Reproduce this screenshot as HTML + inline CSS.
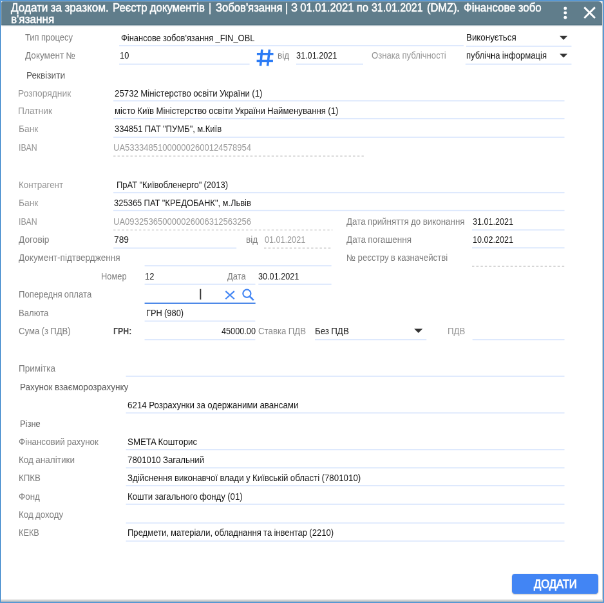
<!DOCTYPE html>
<html lang="uk"><head><meta charset="utf-8"><title>Додати за зразком</title>
<style>
html,body{margin:0;padding:0}
body{width:604px;height:603px;overflow:hidden;position:relative;background:#fff;font-family:"Liberation Sans",sans-serif}
#page{position:absolute;left:0;top:0;width:937.89px;height:936.34px;transform-origin:0 0;transform:scale(0.644);will-change:transform;background:#fff;overflow:hidden}
#hdr{position:absolute;left:1.55px;top:1.86px;width:933.54px;height:37.58px;background:#607d8b;border-radius:3px 6px 0 0;border-bottom:1.5px solid #50707f;box-sizing:border-box;box-shadow:0 1px 1.5px rgba(70,100,120,.55)}
.t{position:absolute;white-space:nowrap;word-spacing:-0.4px;line-height:1;transform-origin:0 0;display:block}
#btn{position:absolute;left:794.72px;top:891.15px;width:133.85px;height:30.90px;background:#4285f4;border-radius:4.5px;box-shadow:0 1px 2px rgba(0,0,0,.3)}
svg{position:absolute;overflow:visible}
</style></head><body><div id="page">
<div id="hdr"></div>

<div id="btn"></div>
<span class="t" style="left:16.93px;top:3px;font-size:18px;color:#fff;-webkit-text-stroke:0.55px #fff;transform:scaleX(0.9500);">Додати за зразком.</span>
<span class="t" style="left:175.31px;top:3px;font-size:18px;color:#fff;-webkit-text-stroke:0.55px #fff;transform:scaleX(0.9289);">Реєстр документів</span>
<span class="t" style="left:324.38px;top:3px;font-size:18px;color:#fff;-webkit-text-stroke:0.55px #fff;transform:scaleX(0.9000);">|</span>
<span class="t" style="left:334.63px;top:3px;font-size:18px;color:#fff;-webkit-text-stroke:0.55px #fff;transform:scaleX(0.9246);">Зобов'язання</span>
<span class="t" style="left:442.55px;top:3px;font-size:18px;color:#fff;-webkit-text-stroke:0.55px #fff;transform:scaleX(0.9000);">|</span>
<span class="t" style="left:451.86px;top:3px;font-size:18px;color:#fff;-webkit-text-stroke:0.55px #fff;transform:scaleX(0.9227);">З 01.01.2021 по</span>
<span class="t" style="left:576.55px;top:3px;font-size:18px;color:#fff;-webkit-text-stroke:0.55px #fff;transform:scaleX(0.8824);">31.01.2021</span>
<span class="t" style="left:662.73px;top:3px;font-size:18px;color:#fff;-webkit-text-stroke:0.55px #fff;transform:scaleX(0.9097);">(DMZ).</span>
<span class="t" style="left:719.88px;top:3px;font-size:18px;color:#fff;-webkit-text-stroke:0.55px #fff;transform:scaleX(0.9342);">Фінансове зобо</span>
<span class="t" style="left:16.93px;top:21px;font-size:18px;color:#fff;-webkit-text-stroke:0.55px #fff;transform:scaleX(0.9518);">в'язання</span>
<span class="t" style="left:39.13px;top:51px;font-size:14px;color:#7c7c7c;transform:scaleX(0.9281);">Тип процесу</span>
<span class="t" style="left:187.89px;top:52px;font-size:14px;color:#161616;transform:scaleX(0.9223);">Фінансове зобов'язання _FIN_OBL</span>
<span class="t" style="left:724.38px;top:51px;font-size:14px;color:#161616;transform:scaleX(0.9539);">Виконується</span>
<span class="t" style="left:39.13px;top:79px;font-size:14px;color:#7c7c7c;transform:scaleX(0.9688);">Документ №</span>
<span class="t" style="left:186.34px;top:79px;font-size:14px;color:#161616;transform:scaleX(0.9170);">10</span>
<span class="t" style="left:430.59px;top:79px;font-size:14px;color:#7c7c7c;transform:scaleX(0.9623);">від</span>
<span class="t" style="left:459.63px;top:79px;font-size:14px;color:#161616;transform:scaleX(0.9040);">31.01.2021</span>
<span class="t" style="left:577.33px;top:79px;font-size:14px;color:#949494;transform:scaleX(0.9384);">Ознака публічності</span>
<span class="t" style="left:724.38px;top:79px;font-size:14px;color:#161616;transform:scaleX(0.9345);">публічна інформація</span>
<span class="t" style="left:41.15px;top:110px;font-size:14px;color:#555;transform:scaleX(0.9746);">Реквізити</span>
<span class="t" style="left:28.26px;top:138px;font-size:14px;color:#949494;transform:scaleX(0.9891);">Розпорядник</span>
<span class="t" style="left:177.80px;top:138px;font-size:14px;color:#161616;transform:scaleX(0.9488);">25732 Міністерство освіти України (1)</span>
<span class="t" style="left:28.26px;top:165px;font-size:14px;color:#949494;transform:scaleX(0.9840);">Платник</span>
<span class="t" style="left:177.95px;top:165px;font-size:14px;color:#161616;transform:scaleX(0.9469);">місто Київ Міністерство освіти України Найменування (1)</span>
<span class="t" style="left:28.73px;top:193px;font-size:14px;color:#949494;transform:scaleX(0.9817);">Банк</span>
<span class="t" style="left:177.80px;top:193px;font-size:14px;color:#161616;transform:scaleX(0.9308);">334851 ПАТ "ПУМБ", м.Київ</span>
<span class="t" style="left:28.73px;top:222px;font-size:14px;color:#949494;transform:scaleX(0.8788);">IBAN</span>
<span class="t" style="left:176.24px;top:222px;font-size:14px;color:#999;transform:scaleX(0.9316);">UA533348510000002600124578954</span>
<span class="t" style="left:28.73px;top:280px;font-size:14px;color:#949494;transform:scaleX(0.9545);">Контрагент</span>
<span class="t" style="left:180.90px;top:280px;font-size:14px;color:#161616;transform:scaleX(0.9298);">ПрАТ "Київобленерго" (2013)</span>
<span class="t" style="left:28.73px;top:308px;font-size:14px;color:#949494;transform:scaleX(0.9817);">Банк</span>
<span class="t" style="left:177.33px;top:308px;font-size:14px;color:#161616;transform:scaleX(0.9274);">325365 ПАТ "КРЕДОБАНК", м.Львів</span>
<span class="t" style="left:28.73px;top:337px;font-size:14px;color:#949494;transform:scaleX(0.8788);">IBAN</span>
<span class="t" style="left:176.24px;top:337px;font-size:14px;color:#999;transform:scaleX(0.9316);">UA093253650000026006312563256</span>
<span class="t" style="left:538.35px;top:337px;font-size:14px;color:#7c7c7c;transform:scaleX(0.9557);">Дата прийняття до виконання</span>
<span class="t" style="left:733.85px;top:337px;font-size:14px;color:#161616;transform:scaleX(0.8996);">31.01.2021</span>
<span class="t" style="left:28.73px;top:365px;font-size:14px;color:#7c7c7c;transform:scaleX(0.9797);">Договір</span>
<span class="t" style="left:177.02px;top:365px;font-size:14px;color:#161616;transform:scaleX(0.9838);">789</span>
<span class="t" style="left:381.68px;top:365px;font-size:14px;color:#7c7c7c;transform:scaleX(0.9789);">від</span>
<span class="t" style="left:410.87px;top:365px;font-size:14px;color:#999;transform:scaleX(0.9018);">01.01.2021</span>
<span class="t" style="left:538.35px;top:365px;font-size:14px;color:#7c7c7c;transform:scaleX(0.9672);">Дата погашення</span>
<span class="t" style="left:733.85px;top:365px;font-size:14px;color:#161616;transform:scaleX(0.8996);">10.02.2021</span>
<span class="t" style="left:28.73px;top:393px;font-size:14px;color:#7c7c7c;transform:scaleX(0.9673);">Документ-підтвердження</span>
<span class="t" style="left:538.35px;top:393px;font-size:14px;color:#7c7c7c;transform:scaleX(0.9462);">№ реєстру в казначействі</span>
<span class="t" style="left:156.83px;top:422px;font-size:14px;color:#7c7c7c;transform:scaleX(0.9188);">Номер</span>
<span class="t" style="left:224.69px;top:422px;font-size:14px;color:#161616;transform:scaleX(0.9270);">12</span>
<span class="t" style="left:352.80px;top:422px;font-size:14px;color:#7c7c7c;transform:scaleX(0.9212);">Дата</span>
<span class="t" style="left:400.93px;top:422px;font-size:14px;color:#161616;transform:scaleX(0.9040);">30.01.2021</span>
<span class="t" style="left:28.73px;top:450px;font-size:14px;color:#7c7c7c;transform:scaleX(0.9393);">Попередня оплата</span>
<span class="t" style="left:28.73px;top:479px;font-size:14px;color:#7c7c7c;transform:scaleX(0.9342);">Валюта</span>
<span class="t" style="left:227.33px;top:479px;font-size:14px;color:#161616;transform:scaleX(0.9189);">ГРН (980)</span>
<span class="t" style="left:28.73px;top:507px;font-size:14px;color:#7c7c7c;transform:scaleX(0.9392);">Сума (з ПДВ)</span>
<span class="t" style="left:176.40px;top:507px;font-size:14px;color:#444;font-weight:bold;transform:scaleX(0.8819);">ГРН:</span>
<span class="t" style="left:343.94px;top:507px;font-size:14px;color:#161616;transform:scaleX(0.9066);">45000.00</span>
<span class="t" style="left:401.09px;top:507px;font-size:14px;color:#8a8a8a;transform:scaleX(0.9473);">Ставка ПДВ</span>
<span class="t" style="left:489.13px;top:507px;font-size:14px;color:#161616;transform:scaleX(0.9518);">Без ПДВ</span>
<span class="t" style="left:694.57px;top:507px;font-size:14px;color:#949494;transform:scaleX(0.9460);">ПДВ</span>
<span class="t" style="left:28.73px;top:565px;font-size:14px;color:#7c7c7c;transform:scaleX(0.9678);">Примітка</span>
<span class="t" style="left:30.90px;top:594px;font-size:14px;color:#555;transform:scaleX(0.9659);">Рахунок взаєморозрахунку</span>
<span class="t" style="left:197.67px;top:622px;font-size:14px;color:#161616;transform:scaleX(0.9568);">6214 Розрахунки за одержаними авансами</span>
<span class="t" style="left:31.21px;top:651px;font-size:14px;color:#555;transform:scaleX(0.9211);">Різне</span>
<span class="t" style="left:28.73px;top:679px;font-size:14px;color:#7c7c7c;transform:scaleX(0.9551);">Фінансовий рахунок</span>
<span class="t" style="left:197.67px;top:679px;font-size:14px;color:#161616;transform:scaleX(0.9516);">SMETA Кошторис</span>
<span class="t" style="left:28.73px;top:707px;font-size:14px;color:#7c7c7c;transform:scaleX(0.9655);">Код аналітики</span>
<span class="t" style="left:197.67px;top:707px;font-size:14px;color:#161616;transform:scaleX(0.9478);">7801010 Загальний</span>
<span class="t" style="left:28.73px;top:735px;font-size:14px;color:#7c7c7c;transform:scaleX(0.9521);">КПКВ</span>
<span class="t" style="left:197.67px;top:735px;font-size:14px;color:#161616;transform:scaleX(0.9515);">Здійснення виконавчої влади у Київській області (7801010)</span>
<span class="t" style="left:28.73px;top:764px;font-size:14px;color:#7c7c7c;transform:scaleX(0.9585);">Фонд</span>
<span class="t" style="left:197.67px;top:764px;font-size:14px;color:#161616;transform:scaleX(0.9439);">Кошти загального фонду (01)</span>
<span class="t" style="left:28.73px;top:792px;font-size:14px;color:#7c7c7c;transform:scaleX(0.9519);">Код доходу</span>
<span class="t" style="left:28.73px;top:820px;font-size:14px;color:#7c7c7c;transform:scaleX(0.9095);">КЕКВ</span>
<span class="t" style="left:197.67px;top:820px;font-size:14px;color:#161616;transform:scaleX(0.9315);">Предмети, матеріали, обладнання та інвентар (2210)</span>
<span class="t" style="left:828.57px;top:898px;font-size:18px;color:#fff;-webkit-text-stroke:0.8500000000000001px #fff;transform:scaleX(0.9206);">ДОДАТИ</span>

<svg style="left:0;top:0" width="937.89" height="936.34" viewBox="0 0 604 603">
 <g stroke="#2b7bf5" stroke-width="2.3" fill="none">
  <path d="M262.0 49.5 L260.5 65.8 M269.5 49.5 L267.6 65.8 M256.9 53.9 H273.4 M256.7 60.9 H273.0"/>
 </g>
 <path d="M559.7 35.9 H567.4 L563.55 39.9 Z" fill="#333"/>
 <path d="M559.7 53.7 H567.4 L563.55 57.7 Z" fill="#333"/>
 <path d="M414.2 328.8 H422.6 L418.4 332.9 Z" fill="#333"/>
 <rect x="199.9" y="289" width="1.2" height="10.6" fill="#333"/>
 <g stroke="#4285f4" stroke-width="1.4" fill="none">
  <path d="M225.6 291.2 L234.3 299 M234.3 291.2 L225.6 299"/>
  <circle cx="246.9" cy="293.5" r="3.9"/>
  <path d="M249.7 296.4 L253.6 300.2" stroke-width="1.7"/>
 </g>
 <g fill="#fff">
  <circle cx="565.3" cy="8.3" r="1.6"/><circle cx="565.3" cy="12.9" r="1.6"/><circle cx="565.3" cy="17.5" r="1.6"/>
 </g>
 <path d="M584.3 7.3 L595 18 M595 7.3 L584.3 18" stroke="#fff" stroke-width="1.9" fill="none"/>
</svg>
</div>
<svg id="lines" style="left:0;top:0" width="604" height="603" viewBox="0 0 604 603">
<defs><linearGradient id="gb" x1="0" y1="0" x2="0" y2="1"><stop offset="0" stop-color="#ececec"/><stop offset="1" stop-color="#b4b4b4"/></linearGradient></defs>
<rect x="602.1" y="1.2" width="0.9" height="600" fill="#cdcdcd"/>
<rect x="1" y="599.2" width="602" height="2.7" fill="url(#gb)"/>
<rect x="0" y="0" width="1.0" height="603" fill="#5898d3"/>
<rect x="0" y="0" width="604" height="1.2" fill="#5898d3"/>
<rect x="602.9" y="0" width="1.1" height="603" fill="#5898d3"/>
<rect x="0" y="601.8" width="604" height="1.2" fill="#5898d3"/>

<rect x="119" y="44.98" width="344.7" height="1.25" fill="#dee9fd"/>
<rect x="466.0" y="45.67" width="105.5" height="1.25" fill="#dee9fd"/>
<rect x="119" y="63.58" width="130.6" height="1.25" fill="#dee9fd"/>
<rect x="296" y="63.58" width="67.0" height="1.25" fill="#dee9fd"/>
<rect x="465.5" y="63.58" width="106.0" height="1.25" fill="#dee9fd"/>
<rect x="113.3" y="100.17" width="451.2" height="1.25" fill="#dee9fd"/>
<rect x="113.3" y="117.97" width="451.2" height="1.25" fill="#dee9fd"/>
<rect x="113.3" y="136.68" width="451.2" height="1.25" fill="#dee9fd"/>
<line x1="113.3" x2="364" y1="156.20" y2="156.20" stroke="#d6d6d6" stroke-width="1.2" stroke-dasharray="2.3 1.98"/>
<rect x="113.3" y="191.97" width="451.2" height="1.25" fill="#dee9fd"/>
<rect x="113.3" y="209.88" width="451.2" height="1.25" fill="#dee9fd"/>
<line x1="113.3" x2="332.5" y1="230.00" y2="230.00" stroke="#d6d6d6" stroke-width="1.2" stroke-dasharray="2.3 1.98"/>
<rect x="472" y="229.28" width="92.5" height="1.25" fill="#dee9fd"/>
<rect x="113.3" y="247.47" width="123.1" height="1.25" fill="#dee9fd"/>
<line x1="264" x2="332.5" y1="248.10" y2="248.10" stroke="#d6d6d6" stroke-width="1.2" stroke-dasharray="2.3 1.98"/>
<rect x="472" y="247.18" width="92.5" height="1.25" fill="#dee9fd"/>
<rect x="144.6" y="265.07" width="186.9" height="1.25" fill="#dee9fd"/>
<line x1="472" x2="564.5" y1="266.30" y2="266.30" stroke="#d6d6d6" stroke-width="1.2" stroke-dasharray="2.3 1.98"/>
<rect x="144.6" y="283.68" width="110.8" height="1.25" fill="#dee9fd"/>
<rect x="258.3" y="283.68" width="73.2" height="1.25" fill="#dee9fd"/>
<rect x="144.6" y="302.62" width="110.9" height="1.35" fill="#4a86e8"/>
<rect x="144.6" y="320.48" width="110.7" height="1.25" fill="#dee9fd"/>
<rect x="144.6" y="338.98" width="110.7" height="1.25" fill="#dee9fd"/>
<rect x="315" y="338.98" width="111.4" height="1.25" fill="#dee9fd"/>
<rect x="472.5" y="338.98" width="92.0" height="1.25" fill="#dee9fd"/>
<rect x="125.8" y="375.68" width="438.7" height="1.25" fill="#dee9fd"/>
<rect x="125.8" y="412.27" width="438.7" height="1.25" fill="#dee9fd"/>
<rect x="125.8" y="448.98" width="438.7" height="1.25" fill="#dee9fd"/>
<rect x="125.8" y="467.18" width="438.7" height="1.25" fill="#dee9fd"/>
<rect x="125.8" y="484.98" width="438.7" height="1.25" fill="#dee9fd"/>
<rect x="125.8" y="503.68" width="438.7" height="1.25" fill="#dee9fd"/>
<rect x="125.8" y="522.38" width="438.7" height="1.25" fill="#dee9fd"/>
<rect x="125.8" y="540.48" width="438.7" height="1.25" fill="#dee9fd"/>
</svg>
</body></html>
